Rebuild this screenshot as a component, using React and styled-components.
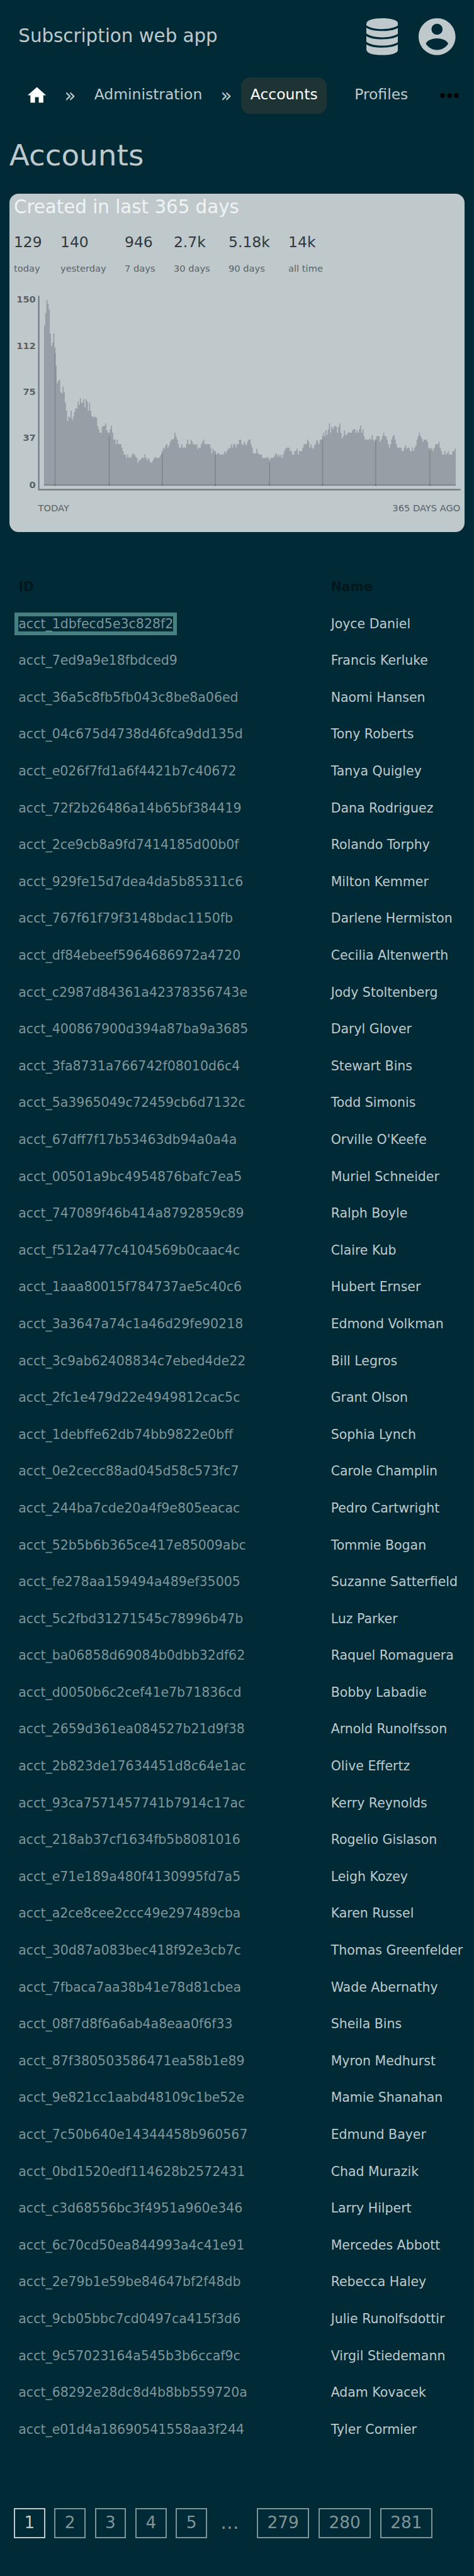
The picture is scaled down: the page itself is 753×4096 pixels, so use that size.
import React from "react";
import styled, { createGlobalStyle } from "styled-components";

/* 1rem is ten layout units; the page is 411 units wide. */
const GlobalStyle = createGlobalStyle`
  html { font-size: 18.3148px; }
  body {
    margin: 0;
    background: #002b36;
    color: #bfc9cc;
    font-family: "DejaVu Sans", Verdana, sans-serif;
  }
  *, *::before, *::after { box-sizing: border-box; }
`;

const Page = styled.div`
  width: 100%;
  height: 223.6rem;
  overflow: hidden;
`;

const Header = styled.header`
  height: 6.4rem;
  display: flex;
  align-items: center;
  padding: 0 1.6rem;
`;

const Brand = styled.div`
  flex: 1;
  font-size: 1.6rem;
  line-height: 2.4rem;
  padding-bottom: 0.06rem;
`;

const HeaderIcon = styled.svg`
  display: block;
  width: ${(p) => p.$width}rem;
  height: 3.2rem;
  margin-left: 1.8rem;
  fill: currentColor;
`;

const Nav = styled.nav`
  height: 3.2rem;
  margin-top: 0.3rem;
  padding-left: 1.6rem;
  display: flex;
  align-items: center;
  white-space: nowrap;
`;

const HomeLink = styled.a`
  width: 3.2rem;
  height: 3.2rem;
  display: flex;
  align-items: center;
  justify-content: center;
  color: #fff;

  svg {
    display: block;
    width: 1.92rem;
    height: 1.92rem;
    fill: currentColor;
  }
`;

const Separator = styled.span`
  margin: 0 0.8rem;
  font-size: 1.6rem;
  line-height: 3.2rem;
`;

const NavLink = styled.a`
  height: 3.2rem;
  padding: 0 0.8rem 0.22rem;
  margin-right: ${(p) => (p.$spaced ? "1.6rem" : 0)};
  display: flex;
  align-items: center;
  border-radius: 0.8rem;
  font-size: 1.28rem;
  color: ${(p) => (p.$active ? "#fff" : "#bfc9cc")};
  background: ${(p) => (p.$active ? "#1e3334" : "transparent")};
`;

const MoreIcon = styled.svg`
  display: block;
  width: 2.4rem;
  height: 2.4rem;
  flex: none;
  fill: #000;
`;

const Title = styled.h1`
  margin: 1.8rem 0 1.5rem;
  padding-left: 0.8rem;
  font-size: 2.56rem;
  line-height: 3.6rem;
  font-weight: 400;
`;

const Card = styled.section`
  height: 29.4rem;
  margin: 0 0.8rem;
  border-radius: 0.8rem;
  background: #bfc9cc;
  overflow: hidden;
`;

const CardTitle = styled.h2`
  margin: 0;
  padding-left: 0.4rem;
  font-size: 1.6rem;
  line-height: 2.32rem;
  font-weight: 400;
  color: #eff3f4;
`;

const Stats = styled.dl`
  display: flex;
  gap: 1.6rem;
  height: 3.9rem;
  margin: 0.93rem 0 0;
  padding-left: 0.4rem;
`;

const Stat = styled.div`
  display: flex;
  flex-direction: column-reverse;
  justify-content: flex-end;
`;

const StatValue = styled.dd`
  margin: 0;
  font-size: 1.28rem;
  line-height: 2rem;
  color: #30383d;
`;

const StatLabel = styled.dt`
  margin-top: 0.6rem;
  font-size: 0.8rem;
  line-height: 1.3rem;
  color: #5a6366;
`;

const ChartSvg = styled.svg`
  display: block;
  width: 100%;
  height: 22.2rem;

  text {
    font-size: 8px;
    fill: #596164;
  }
`;

const TickLabel = styled.text`
  font-weight: 700;
  text-anchor: end;
`;

const Table = styled.div`
  margin-top: 3.15rem;
  font-size: 1.12rem;
`;

const Row = styled.div`
  display: grid;
  grid-template-columns: 27.1rem 1fr;
  align-items: center;
  height: 3.2rem;
  padding-left: 1.6rem;
  white-space: nowrap;
`;

const HeadRow = styled(Row)`
  font-weight: 700;
  color: #00171e;
`;

const AccountLink = styled.a`
  justify-self: start;
  color: #7f9499;
  outline: ${(p) => (p.$focused ? "6px solid #478080" : "none")};
`;

const Pagination = styled.nav`
  display: flex;
  gap: 0.8rem;
  margin-top: 5.23rem;
  padding-left: 1.2rem;
  font-size: 1.44rem;
`;

const PageLink = styled.a`
  height: 2.62rem;
  padding: 0 0.79rem 0.1rem;
  display: flex;
  align-items: center;
  border: 2px solid ${(p) => (p.$current ? "#bfc9cc" : "#7f9499")};
  color: ${(p) => (p.$current ? "#bfc9cc" : "#7f9499")};
`;

const Ellipsis = styled.span`
  width: 2.72rem;
  height: 2.62rem;
  padding: 0 0.4rem 0.1rem 0;
  display: flex;
  align-items: center;
  justify-content: center;
  font-size: 1.6rem;
  color: #7f9499;
`;

const stats = [
  ["129", "today"],
  ["140", "yesterday"],
  ["946", "7 days"],
  ["2.7k", "30 days"],
  ["5.18k", "90 days"],
  ["14k", "all time"],
];

const days = [
  139, 150, 161, 158, 153, 132, 121, 124, 132, 120, 104, 89, 91, 92, 81, 80, 86, 81, 72, 65,
  56, 60, 59, 65, 57, 60, 64, 67, 67, 73, 70, 76, 72, 72, 75, 68, 75, 73, 65, 72,
  65, 60, 60, 59, 60, 59, 52, 49, 46, 46, 51, 52, 52, 54, 48, 46, 46, 49, 52, 46,
  40, 40, 36, 40, 36, 36, 36, 33, 30, 27, 27, 24, 27, 24, 25, 24, 27, 28, 27, 25,
  24, 20, 22, 22, 24, 24, 24, 27, 24, 22, 24, 22, 20, 20, 22, 24, 25, 24, 24, 24,
  25, 27, 30, 33, 32, 35, 36, 33, 35, 38, 40, 40, 41, 46, 43, 40, 36, 33, 33, 36,
  33, 33, 33, 36, 40, 36, 36, 40, 38, 36, 36, 35, 36, 32, 33, 33, 36, 38, 40, 36,
  36, 36, 36, 36, 33, 28, 32, 30, 30, 27, 28, 28, 27, 27, 27, 27, 30, 28, 30, 32,
  32, 33, 36, 33, 36, 36, 33, 36, 36, 40, 40, 36, 35, 38, 36, 35, 38, 40, 40, 36,
  33, 28, 28, 28, 32, 28, 27, 27, 27, 24, 24, 24, 24, 25, 24, 22, 24, 24, 24, 25,
  27, 28, 25, 27, 25, 27, 24, 27, 30, 32, 33, 33, 33, 30, 30, 27, 27, 30, 30, 32,
  27, 30, 30, 30, 33, 36, 36, 36, 40, 38, 33, 36, 33, 32, 35, 36, 40, 38, 36, 40,
  40, 43, 46, 43, 48, 44, 49, 54, 46, 51, 49, 51, 52, 51, 46, 51, 54, 46, 41, 43,
  48, 44, 44, 46, 46, 46, 46, 48, 49, 49, 46, 48, 46, 49, 52, 46, 49, 43, 40, 40,
  40, 40, 41, 40, 44, 40, 38, 40, 43, 43, 43, 38, 40, 43, 46, 43, 43, 40, 36, 33,
  36, 40, 43, 44, 40, 36, 33, 33, 33, 33, 30, 30, 33, 35, 32, 33, 33, 30, 30, 33,
  30, 33, 35, 40, 43, 46, 43, 41, 38, 40, 40, 40, 38, 33, 32, 33, 32, 30, 33, 36,
  36, 36, 38, 33, 30, 27, 27, 30, 27, 28, 30, 27, 27, 27, 30, 30, 32,
];

const months = [
  [9, 115], [56, 43], [102, 28], [148, 27], [195, 20], [241, 40], [287, 40], [334, 30],
];

const ticks = [["150", 263.1], ["112", 303.1], ["75", 343.1], ["37", 383.1], ["0", 423.9]];

const LEFT = 38;
const BASE = 421.9;
const area = `M${LEFT} ${BASE}${days.map((h) => `V${BASE - h}h1`).join("")}V${BASE}Z`;

const accounts = [
  ["acct_1dbfecd5e3c828f2", "Joyce Daniel"],
  ["acct_7ed9a9e18fbdced9", "Francis Kerluke"],
  ["acct_36a5c8fb5fb043c8be8a06ed", "Naomi Hansen"],
  ["acct_04c675d4738d46fca9dd135d", "Tony Roberts"],
  ["acct_e026f7fd1a6f4421b7c40672", "Tanya Quigley"],
  ["acct_72f2b26486a14b65bf384419", "Dana Rodriguez"],
  ["acct_2ce9cb8a9fd7414185d00b0f", "Rolando Torphy"],
  ["acct_929fe15d7dea4da5b85311c6", "Milton Kemmer"],
  ["acct_767f61f79f3148bdac1150fb", "Darlene Hermiston"],
  ["acct_df84ebeef5964686972a4720", "Cecilia Altenwerth"],
  ["acct_c2987d84361a42378356743e", "Jody Stoltenberg"],
  ["acct_400867900d394a87ba9a3685", "Daryl Glover"],
  ["acct_3fa8731a766742f08010d6c4", "Stewart Bins"],
  ["acct_5a3965049c72459cb6d7132c", "Todd Simonis"],
  ["acct_67dff7f17b53463db94a0a4a", "Orville O'Keefe"],
  ["acct_00501a9bc4954876bafc7ea5", "Muriel Schneider"],
  ["acct_747089f46b414a8792859c89", "Ralph Boyle"],
  ["acct_f512a477c4104569b0caac4c", "Claire Kub"],
  ["acct_1aaa80015f784737ae5c40c6", "Hubert Ernser"],
  ["acct_3a3647a74c1a46d29fe90218", "Edmond Volkman"],
  ["acct_3c9ab62408834c7ebed4de22", "Bill Legros"],
  ["acct_2fc1e479d22e4949812cac5c", "Grant Olson"],
  ["acct_1debffe62db74bb9822e0bff", "Sophia Lynch"],
  ["acct_0e2cecc88ad045d58c573fc7", "Carole Champlin"],
  ["acct_244ba7cde20a4f9e805eacac", "Pedro Cartwright"],
  ["acct_52b5b6b365ce417e85009abc", "Tommie Bogan"],
  ["acct_fe278aa159494a489ef35005", "Suzanne Satterfield"],
  ["acct_5c2fbd31271545c78996b47b", "Luz Parker"],
  ["acct_ba06858d69084b0dbb32df62", "Raquel Romaguera"],
  ["acct_d0050b6c2cef41e7b71836cd", "Bobby Labadie"],
  ["acct_2659d361ea084527b21d9f38", "Arnold Runolfsson"],
  ["acct_2b823de17634451d8c64e1ac", "Olive Effertz"],
  ["acct_93ca7571457741b7914c17ac", "Kerry Reynolds"],
  ["acct_218ab37cf1634fb5b8081016", "Rogelio Gislason"],
  ["acct_e71e189a480f4130995fd7a5", "Leigh Kozey"],
  ["acct_a2ce8cee2ccc49e297489cba", "Karen Russel"],
  ["acct_30d87a083bec418f92e3cb7c", "Thomas Greenfelder"],
  ["acct_7fbaca7aa38b41e78d81cbea", "Wade Abernathy"],
  ["acct_08f7d8f6a6ab4a8eaa0f6f33", "Sheila Bins"],
  ["acct_87f380503586471ea58b1e89", "Myron Medhurst"],
  ["acct_9e821cc1aabd48109c1be52e", "Mamie Shanahan"],
  ["acct_7c50b640e14344458b960567", "Edmund Bayer"],
  ["acct_0bd1520edf114628b2572431", "Chad Murazik"],
  ["acct_c3d68556bc3f4951a960e346", "Larry Hilpert"],
  ["acct_6c70cd50ea844993a4c41e91", "Mercedes Abbott"],
  ["acct_2e79b1e59be84647bf2f48db", "Rebecca Haley"],
  ["acct_9cb05bbc7cd0497ca415f3d6", "Julie Runolfsdottir"],
  ["acct_9c57023164a545b3b6ccaf9c", "Virgil Stiedemann"],
  ["acct_68292e28dc8d4b8bb559720a", "Adam Kovacek"],
  ["acct_e01d4a18690541558aa3f244", "Tyler Cormier"],
];

function CreatedChart() {
  return (
    <ChartSvg viewBox="8 240 395 222" preserveAspectRatio="none">
      <path d={area} fill="#979fa6" />
      {months.map(([day, h]) => (
        <rect key={day} x={LEFT + day} y={BASE - h} width="1" height={h} fill="#808990" />
      ))}
      <rect x={LEFT} y={BASE - 1.05} width={days.length} height="1.05" fill="#7b838a" />
      {months.map(([day]) => (
        <rect key={day} x={LEFT + day} y={BASE - 1.05} width="1" height="1.05" fill="#5c656c" />
      ))}
      <path d="M32.85 257H34V424.8H399.1V426H32.85Z" fill="#6c777f" />
      {ticks.map(([label, y]) => (
        <TickLabel key={label} x="30.8" y={y}>{label}</TickLabel>
      ))}
      <text x="32.9" y="444.1">TODAY</text>
      <text x="399" y="444.1" textAnchor="end">365 DAYS AGO</text>
    </ChartSvg>
  );
}

export default function App() {
  return (
    <Page>
      <GlobalStyle />
      <Header>
        <Brand>Subscription web app</Brand>
        <HeaderIcon $width={2.76} viewBox="0 0 27.6 32">
          <path d="M0 5C0 1.6 6 0 13.8 0S27.6 1.6 27.6 5V6.1C24.6 8.5 18.8 9.4 13.8 9.4S3 8.5 0 6.1Z" />
          <path d="M0 8.2C3 10.4 8.8 11.1 13.8 11.1S24.6 10.4 27.6 8.2V13.3C24.6 15.7 18.8 16.6 13.8 16.6S3 15.7 0 13.3Z" />
          <path d="M0 15.4C3 17.6 8.8 18.3 13.8 18.3S24.6 17.6 27.6 15.4V20.5C24.6 22.9 18.8 23.8 13.8 23.8S3 22.9 0 20.5Z" />
          <path d="M0 22.6C3 24.8 8.8 25.5 13.8 25.5S24.6 24.8 27.6 22.6V27C27.6 30.4 21.6 32 13.8 32S0 30.4 0 27Z" />
        </HeaderIcon>
        <HeaderIcon $width={3.2} viewBox="2 2 20 20">
          <path d="M12 2C6.48 2 2 6.48 2 12s4.48 10 10 10 10-4.48 10-10S17.52 2 12 2zm0 3c1.66 0 3 1.34 3 3s-1.34 3-3 3-3-1.34-3-3 1.34-3 3-3zm0 14.2c-2.5 0-4.71-1.28-6-3.22.03-1.99 4-3.08 6-3.08 1.99 0 5.97 1.09 6 3.08-1.29 1.94-3.5 3.22-6 3.22z" />
        </HeaderIcon>
      </Header>

      <Nav>
        <HomeLink>
          <svg viewBox="0 0 24 24">
            <path d="M10 20v-6h4v6h5v-8h3L12 3 2 12h3v8z" />
          </svg>
        </HomeLink>
        <Separator>»</Separator>
        <NavLink>Administration</NavLink>
        <Separator>»</Separator>
        <NavLink $active $spaced>Accounts</NavLink>
        <NavLink $spaced>Profiles</NavLink>
        <MoreIcon viewBox="0 0 24 24">
          <circle cx="6" cy="12" r="2" />
          <circle cx="12" cy="12" r="2" />
          <circle cx="18" cy="12" r="2" />
        </MoreIcon>
      </Nav>

      <Title>Accounts</Title>

      <Card>
        <CardTitle>Created in last 365 days</CardTitle>
        <Stats>
          {stats.map(([value, label]) => (
            <Stat key={label}>
              <StatLabel>{label}</StatLabel>
              <StatValue>{value}</StatValue>
            </Stat>
          ))}
        </Stats>
        <CreatedChart />
      </Card>

      <Table>
        <HeadRow>
          <span>ID</span>
          <span>Name</span>
        </HeadRow>
        {accounts.map(([id, name], i) => (
          <Row key={id}>
            <AccountLink $focused={i === 0}>{id}</AccountLink>
            <span>{name}</span>
          </Row>
        ))}
      </Table>

      <Pagination>
        <PageLink $current>1</PageLink>
        <PageLink>2</PageLink>
        <PageLink>3</PageLink>
        <PageLink>4</PageLink>
        <PageLink>5</PageLink>
        <Ellipsis>…</Ellipsis>
        <PageLink>279</PageLink>
        <PageLink>280</PageLink>
        <PageLink>281</PageLink>
      </Pagination>
    </Page>
  );
}
